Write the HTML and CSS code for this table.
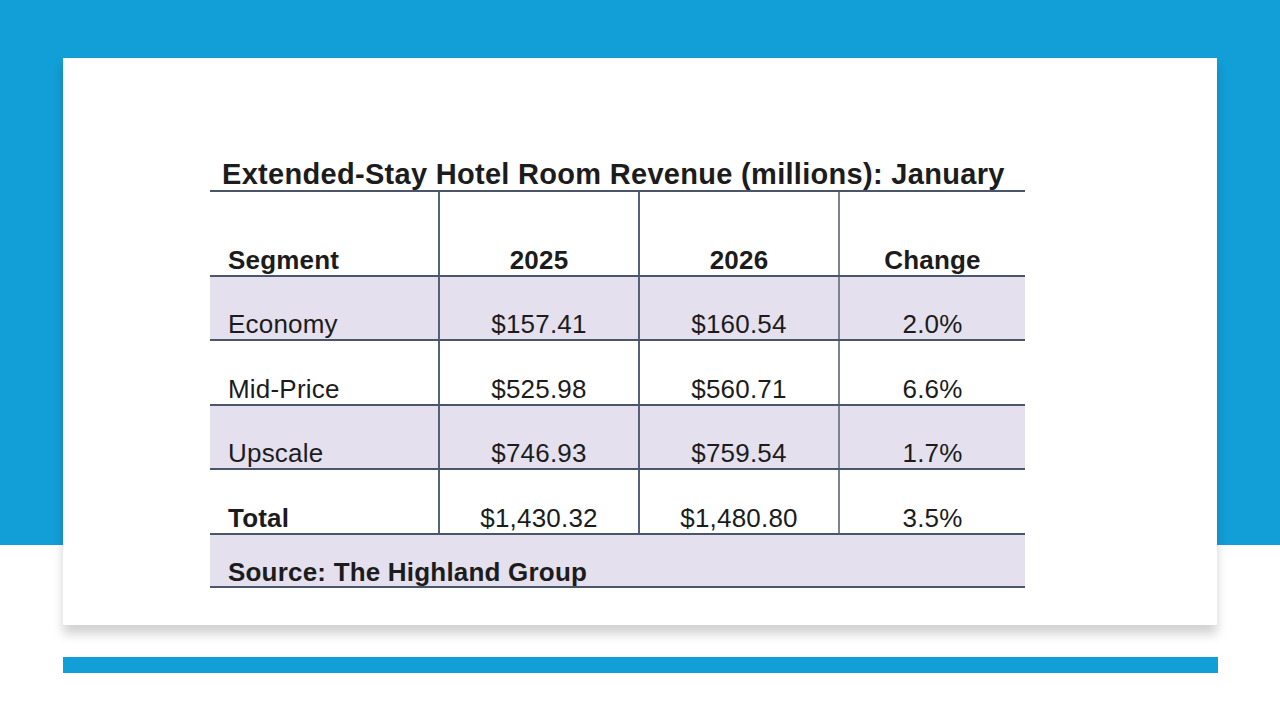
FILE: index.html
```html
<!DOCTYPE html>
<html>
<head>
<meta charset="utf-8">
<link rel="stylesheet" href="styles.css">
</head>
<body>
<div class="page">
  <div class="card">
    <div class="report">
      <div class="title">Extended-Stay Hotel Room Revenue (millions): January</div>
      <table class="grid">
        <colgroup>
          <col class="c1"><col class="c2"><col class="c3"><col class="c4">
        </colgroup>
        <tr class="head">
          <th class="left b2">Segment</th>
          <th class="b2">2025</th>
          <th class="b3">2026</th>
          <th>Change</th>
        </tr>
        <tr class="shade">
          <td class="left b2">Economy</td>
          <td class="b2">$157.41</td>
          <td class="b3">$160.54</td>
          <td>2.0%</td>
        </tr>
        <tr class="tall">
          <td class="left b2">Mid-Price</td>
          <td class="b2">$525.98</td>
          <td class="b3">$560.71</td>
          <td>6.6%</td>
        </tr>
        <tr class="shade">
          <td class="left b2">Upscale</td>
          <td class="b2">$746.93</td>
          <td class="b3">$759.54</td>
          <td>1.7%</td>
        </tr>
        <tr class="tall">
          <td class="left b2 strong">Total</td>
          <td class="b2">$1,430.32</td>
          <td class="b3">$1,480.80</td>
          <td>3.5%</td>
        </tr>
        <tr class="shade source">
          <td class="left strong" colspan="4">Source: The Highland Group</td>
        </tr>
      </table>
    </div>
  </div>
  <div class="rule"></div>
</div>
</body>
</html>
```
FILE: styles.css
```css
html, body {
  margin: 0;
  padding: 0;
  background: #ffffff;
}
.page {
  width: 1280px;
  height: 720px;
  overflow: hidden;
  background: linear-gradient(#129ed6 0, #129ed6 545px, #ffffff 545px);
  padding-top: 58px;
  box-sizing: border-box;
  font-family: "Liberation Sans", Arial, sans-serif;
  color: #1c1c1c;
}
.card {
  margin-left: 63px;
  width: 1154px;
  height: 567px;
  background: #ffffff;
  box-shadow: 0 9px 10px rgba(0, 0, 0, 0.18);
  padding: 100px 0 0 147px;
  box-sizing: border-box;
}
.report {
  width: 815px;
}
.title {
  font-weight: bold;
  font-size: 29px;
  line-height: 32px;
  padding-left: 12px;
  border-bottom: 2px solid #4b566a;
  letter-spacing: 0.3px;
  white-space: nowrap;
}
.grid {
  border-collapse: collapse;
  width: 815px;
  table-layout: fixed;
}
.c1 { width: 229px; }
.c2 { width: 200px; }
.c3 { width: 200px; }
.c4 { width: 186px; }
.grid th, .grid td {
  font-size: 26px;
  letter-spacing: 0.2px;
  text-align: center;
  vertical-align: bottom;
  padding: 0 0 3px 0;
  height: 59px;
  border-bottom: 2px solid #4b566a;
  line-height: 24px;
  white-space: nowrap;
}
.grid th {
  font-weight: bold;
  height: 80px;
}
.grid .tall td {
  height: 60px;
}
.grid .left {
  text-align: left;
  padding-left: 18px;
}
.b2 { border-right: 2px solid #56627a; }
.b3 { border-right: 2px solid #7d8290; }
.shade td { background: #e4e0ee; }
.strong { font-weight: bold; }
.grid .source td {
  height: 49px;
  padding-bottom: 2px;
}
.rule {
  margin: 32px 0 0 63px;
  width: 1155px;
  height: 16px;
  background: #129ed6;
}
```
